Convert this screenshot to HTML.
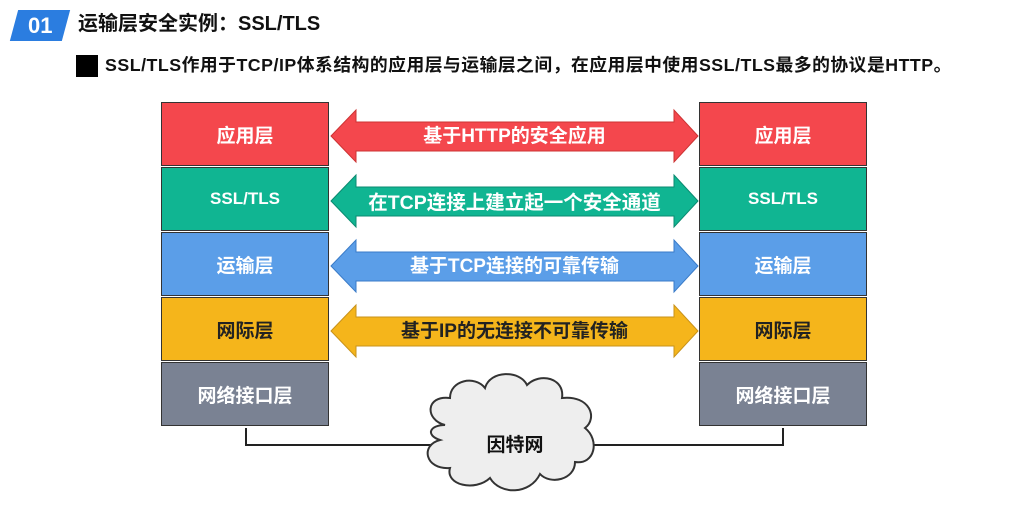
<!DOCTYPE html><html><head><meta charset="utf-8"><style>
body{margin:0;width:1017px;height:513px;background:#fff;position:relative;overflow:hidden;font-family:"Liberation Sans","Noto Sans CJK SC",sans-serif;font-weight:bold}
.a{position:absolute}
.box{position:absolute;width:168px;height:64px;border:1px solid #333;color:#fff;font-size:19px;display:flex;align-items:center;justify-content:center;box-sizing:border-box}
</style></head><body>
<div class="a" style="left:14px;top:10px;width:52px;height:31px;background:#2b7de0;transform:skewX(-15deg)"></div>
<div class="a" style="left:28px;top:10px;color:#fff;font-size:22px;line-height:31px">01</div>
<div class="a" style="left:78px;top:10px;font-size:20px;color:#111;line-height:28px">运输层安全实例：SSL/TLS</div>
<div class="a" style="left:76px;top:55px;width:22px;height:22px;background:#000"></div>
<div class="a" style="left:105px;top:52px;font-size:17.8px;color:#111;line-height:26px;letter-spacing:0.5px">SSL/TLS作用于TCP/IP体系结构的应用层与运输层之间，在应用层中使用SSL/TLS最多的协议是HTTP。</div>

<div class="box" style="left:161px;top:102px;background:#f4474d">应用层</div>
<div class="box" style="left:161px;top:167px;background:#10b592;font-size:17px">SSL/TLS</div>
<div class="box" style="left:161px;top:232px;background:#5b9ee8">运输层</div>
<div class="box" style="left:161px;top:297px;background:#f5b51b;color:#222">网际层</div>
<div class="box" style="left:161px;top:362px;background:#7a8293">网络接口层</div>
<div class="box" style="left:699px;top:102px;background:#f4474d">应用层</div>
<div class="box" style="left:699px;top:167px;background:#10b592;font-size:17px">SSL/TLS</div>
<div class="box" style="left:699px;top:232px;background:#5b9ee8">运输层</div>
<div class="box" style="left:699px;top:297px;background:#f5b51b;color:#222">网际层</div>
<div class="box" style="left:699px;top:362px;background:#7a8293">网络接口层</div>

<svg class="a" style="left:0;top:0" width="1017" height="513">
<g stroke-width="1">
<polygon points="331,136 356,110 356,122 674,122 674,110 698,136 674,162 674,151 356,151 356,162" fill="#f4474d" stroke="#c33"/>
<polygon points="331,201 356,175 356,187 674,187 674,175 698,201 674,227 674,216 356,216 356,227" fill="#10b592" stroke="#0a8a70"/>
<polygon points="331,266 356,240 356,252 674,252 674,240 698,266 674,292 674,281 356,281 356,292" fill="#5b9ee8" stroke="#3a7bc8"/>
<polygon points="331,331 356,305 356,317 674,317 674,305 698,331 674,357 674,346 356,346 356,357" fill="#f5b51b" stroke="#c8921a"/>
</g>
<polyline points="246,428 246,445 440,445" fill="none" stroke="#222" stroke-width="2"/>
<polyline points="590,445 783,445 783,428" fill="none" stroke="#222" stroke-width="2"/>
<path d="M445,425 C425,420 425,395 450,398 C450,380 475,375 485,388 C490,370 520,370 527,385 C540,372 565,378 562,398 C590,395 598,418 585,428 C600,440 595,465 575,462 C575,480 550,485 540,474 C530,495 500,495 490,478 C475,492 445,485 450,468 C425,470 420,445 440,440 C425,435 430,425 445,425 Z" fill="#eeeeee" stroke="#333" stroke-width="2"/>
</svg>
<div class="a" style="left:331px;top:121px;width:367px;text-align:center;color:#fff;font-size:19px">基于HTTP的安全应用</div>
<div class="a" style="left:331px;top:186px;width:367px;text-align:center;color:#fff;font-size:19.5px">在TCP连接上建立起一个安全通道</div>
<div class="a" style="left:331px;top:251px;width:367px;text-align:center;color:#fff;font-size:19px">基于TCP连接的可靠传输</div>
<div class="a" style="left:331px;top:316px;width:367px;text-align:center;color:#222;font-size:19px">基于IP的无连接不可靠传输</div>
<div class="a" style="left:465px;top:430px;width:100px;text-align:center;color:#111;font-size:19px">因特网</div>
</body></html>
